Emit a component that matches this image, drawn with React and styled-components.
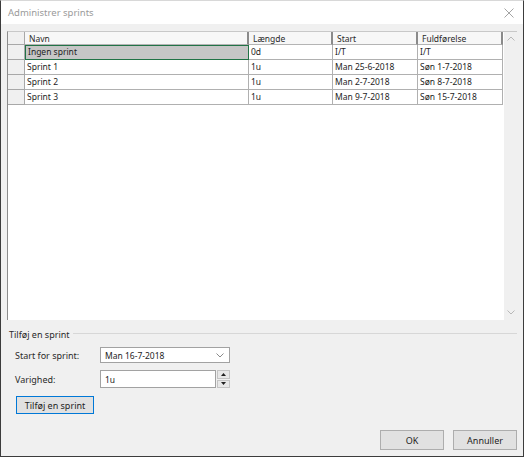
import React from 'react';
import styled, { createGlobalStyle } from 'styled-components';

const GlobalStyle = createGlobalStyle`
  html, body {
    margin: 0;
    padding: 0;
    background: #ffffff;
  }

  body {
    font-family: "Noto Sans", "DejaVu Sans", sans-serif;
    color: #1e1e1e;
  }
`;

const Window = styled.div`
  width: 524px;
  height: 457px;
  box-sizing: border-box;
  border: 1px solid #3c3c3c;
  border-top-color: #d8d8d8;
  display: flex;
  flex-direction: column;
  background: #f0f0f0;
  overflow: hidden;
`;

const TitleBar = styled.div`
  height: 23px;
  background: #ffffff;
  display: flex;
  align-items: center;
  justify-content: space-between;
  padding: 0 9px 0 7px;

  span {
    font-size: 9.5px;
    color: #9a9a9a;
  }
`;

const Body = styled.div`
  flex: 1;
  display: flex;
  flex-direction: column;
  padding: 0 6px 0 6px;
`;

const Grid = styled.div`
  margin-top: 7px;
  height: 289px;
  display: flex;
  background: #ffffff;
  border-left: 1px solid #8c8c8c;
  border-top: 1px solid #c8c8c8;
  box-sizing: border-box;
`;

const Table = styled.div`
  flex: 1;
  display: grid;
  grid-template-columns: 17px 224px 84px 85px 85px;
  grid-auto-rows: 15px;
  grid-template-rows: 13px;
  align-content: start;
  font-size: 8.5px;
`;

const Corner = styled.div`
  background: #f0f0f0;
  border-right: 1px solid #a8a8a8;
  border-bottom: 1px solid #a8a8a8;
`;

const HeadCell = styled.div`
  background: #f7f7f7;
  border-right: 2px solid #8a8a8a;
  border-bottom: 1px solid #b4b4b4;
  padding: 1px 0 0 4px;
  line-height: 12px;
  color: #2a2a2a;
  white-space: nowrap;
  overflow: hidden;
`;

const RowHead = styled.div`
  background: #f0f0f0;
  border-right: 1px solid #a8a8a8;
  border-bottom: 1px solid #a8a8a8;
`;

const Cell = styled.div`
  box-sizing: border-box;
  background: ${p => (p.$selected ? '#c6c6c6' : '#ffffff')};
  border-right: 1px solid #b0b0b0;
  border-bottom: 1px solid #b0b0b0;
  outline: ${p => (p.$selected ? '1px solid #217346' : 'none')};
  outline-offset: -1px;
  padding-left: ${p => (p.$selected ? '3px' : '2px')};
  line-height: 14px;
  color: #1e1e1e;
  white-space: nowrap;
  overflow: hidden;
`;

const ScrollBar = styled.div`
  width: 13px;
  background: #f0f0f0;
  display: flex;
  flex-direction: column;
  justify-content: space-between;
  align-items: center;
  padding: 4px 0 5px;
  box-sizing: border-box;
`;

const GroupHeader = styled.div`
  margin-top: 7px;
  height: 14px;
  display: flex;
  align-items: center;
  font-size: 9px;
  color: #2a2a2a;
  padding-left: 2px;

  &::after {
    content: '';
    flex: 1;
    height: 1px;
    background: #d7d7d7;
    margin: -2px 0 0 3px;
  }
`;

const FormRow = styled.div`
  margin-top: ${p => p.$top}px;
  display: flex;
  align-items: center;
  padding-left: 8px;
`;

const Label = styled.div`
  width: 85px;
  font-size: 9px;
  color: #2a2a2a;
`;

const Combo = styled.div`
  width: 130px;
  height: 16px;
  box-sizing: border-box;
  border: 1px solid #a2a2a2;
  background: #ffffff;
  display: flex;
  align-items: center;
  justify-content: space-between;
  padding: 0 5px 0 4px;
  font-size: 8.5px;
  color: #1e1e1e;
`;

const TextBox = styled.div`
  width: 116px;
  height: 18px;
  box-sizing: border-box;
  border: 1px solid #a2a2a2;
  background: #ffffff;
  display: flex;
  align-items: center;
  padding-left: 4px;
  font-size: 8.5px;
`;

const Spinner = styled.div`
  margin-left: 1px;
  width: 13px;
  height: 18px;
  display: flex;
  flex-direction: column;
  gap: 1px;
`;

const SpinButton = styled.div`
  flex: 1;
  background: #e8e8e8;
  border: 1px solid #c4c4c4;
  display: flex;
  align-items: center;
  justify-content: center;
`;

const Button = styled.button`
  box-sizing: border-box;
  background: #e1e1e1;
  border: 1px solid #adadad;
  font-family: inherit;
  font-size: 9px;
  color: #1e1e1e;
  padding: 0;
  margin: 0;
`;

const AddButton = styled(Button)`
  margin: 8px 0 0 9px;
  width: 78px;
  height: 18px;
  border-color: #0078d7;
  align-self: flex-start;
`;

const Footer = styled.div`
  margin-top: 16px;
  display: flex;
  justify-content: flex-end;
  gap: 9px;
`;

const DialogButton = styled(Button)`
  width: 64px;
  height: 20px;
`;

const Chevron = ({ up, color = '#b8b8b8' }) => (
  <svg width="8" height="5" viewBox="0 0 8 5">
    <path
      d={up ? 'M0.5 4.5 L4 1 L7.5 4.5' : 'M0.5 0.5 L4 4 L7.5 0.5'}
      fill="none"
      stroke={color}
      strokeWidth="1"
    />
  </svg>
);

const sprints = [
  { name: 'Ingen sprint', length: '0d', start: 'I/T', end: 'I/T', selected: true },
  { name: 'Sprint 1', length: '1u', start: 'Man 25-6-2018', end: 'Søn 1-7-2018' },
  { name: 'Sprint 2', length: '1u', start: 'Man 2-7-2018', end: 'Søn 8-7-2018' },
  { name: 'Sprint 3', length: '1u', start: 'Man 9-7-2018', end: 'Søn 15-7-2018' },
];

export default function App() {
  return (
    <>
      <GlobalStyle />
      <Window>
        <TitleBar>
          <span>Administrer sprints</span>
          <svg width="10" height="10" viewBox="0 0 10 10">
            <path d="M0.5 0.5 L9.5 9.5 M9.5 0.5 L0.5 9.5" stroke="#9a9a9a" strokeWidth="0.9" />
          </svg>
        </TitleBar>
        <Body>
          <Grid>
            <Table>
              <Corner />
              <HeadCell>Navn</HeadCell>
              <HeadCell>Længde</HeadCell>
              <HeadCell>Start</HeadCell>
              <HeadCell>Fuldførelse</HeadCell>
              {sprints.map(s => (
                <React.Fragment key={s.name}>
                  <RowHead />
                  <Cell $selected={s.selected}>{s.name}</Cell>
                  <Cell>{s.length}</Cell>
                  <Cell>{s.start}</Cell>
                  <Cell>{s.end}</Cell>
                </React.Fragment>
              ))}
            </Table>
            <ScrollBar>
              <Chevron up />
              <Chevron />
            </ScrollBar>
          </Grid>

          <GroupHeader>Tilføj en sprint</GroupHeader>

          <FormRow $top={6}>
            <Label>Start for sprint:</Label>
            <Combo>
              <span>Man 16-7-2018</span>
              <Chevron color="#8a8a8a" />
            </Combo>
          </FormRow>

          <FormRow $top={7}>
            <Label>Varighed:</Label>
            <TextBox>1u</TextBox>
            <Spinner>
              <SpinButton>
                <svg width="5" height="3" viewBox="0 0 5 3">
                  <path d="M0 3 L2.5 0 L5 3 Z" fill="#202020" />
                </svg>
              </SpinButton>
              <SpinButton>
                <svg width="5" height="3" viewBox="0 0 5 3">
                  <path d="M0 0 L2.5 3 L5 0 Z" fill="#202020" />
                </svg>
              </SpinButton>
            </Spinner>
          </FormRow>

          <AddButton>Tilføj en sprint</AddButton>

          <Footer>
            <DialogButton>OK</DialogButton>
            <DialogButton>Annuller</DialogButton>
          </Footer>
        </Body>
      </Window>
    </>
  );
}
